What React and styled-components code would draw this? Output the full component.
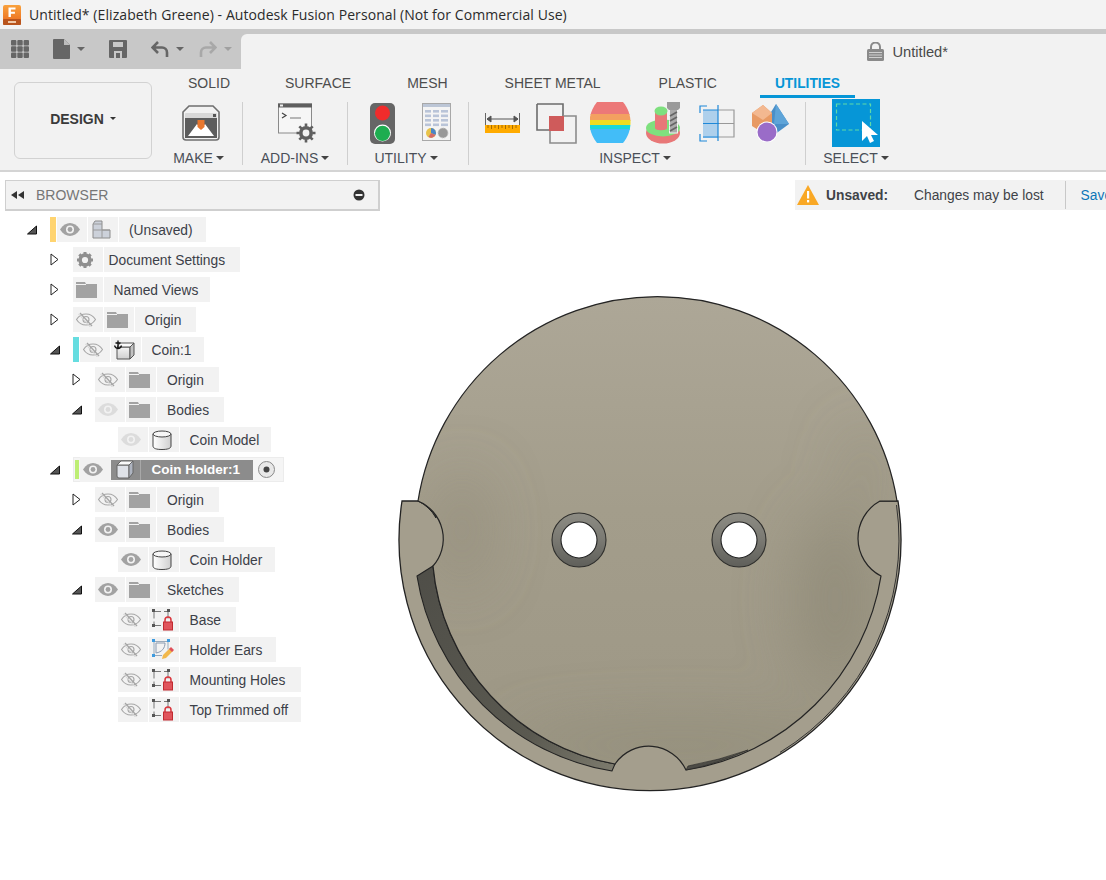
import React from "react";
import styled, { createGlobalStyle, css } from "styled-components";

const Global = createGlobalStyle`
  html, body { margin: 0; padding: 0; background: #fff; }
  body { font-family: "Liberation Sans", Arial, sans-serif; }
  * { box-sizing: border-box; }
  svg { flex: none; }
`;

const Page = styled.div`
  width: 1106px; height: 880px; overflow: hidden; display: flex; flex-direction: column; background: #fff;
`;
const TitleBar = styled.div`
  height: 29px; flex: none; background: #f3f3f3; display: flex; align-items: center; padding-left: 3px; gap: 8px;
`;
const TitleText = styled.span`
  font-family: "Open Sans", sans-serif; font-size: 14px; letter-spacing: 0.075px; color: #2b2b2b; white-space: nowrap;
`;
const QuickBar = styled.div`
  height: 40px; flex: none; background: #c8c8c8; display: flex; align-items: stretch;
`;
const QuickTools = styled.div`
  width: 241px; flex: none; display: flex; align-items: center; padding: 0 0 0 11px;
`;
const QuickIcon = styled.span`
  display: flex; align-items: center; margin-left: ${p => p.$ml || 0}px;
`;
const Caret = styled.span`
  display: inline-block; width: 0; height: 0; flex: none;
  border-left: ${p => p.$s || 4}px solid transparent; border-right: ${p => p.$s || 4}px solid transparent;
  border-top: ${p => p.$s || 4}px solid ${p => p.$c || "#444"};
  margin-left: ${p => p.$ml ?? 4}px;
`;
const DocTab = styled.div`
  flex: 1; margin-top: 5px; background: #f2f2f2; border-top-left-radius: 6px; display: flex; align-items: center; justify-content: flex-end;
  padding: 0 158px 0 0; gap: 8px; font-size: 14.700px; color: #4a4a4a;
`;
const Ribbon = styled.div`
  height: 103px; flex: none; background: #f2f2f2; border-bottom: 2px solid #d4d4d4; display: flex; padding-left: 14px;
`;
const DesignButton = styled.div`
  width: 138px; height: 77px; margin-top: 13px; border: 1px solid #d2d2d2; border-radius: 6px; display: flex; align-items: center; justify-content: center;
  font-size: 14px; font-weight: 700; color: #3a3a3a; padding-bottom: 4px;
`;
const RibbonMain = styled.div`
  flex: 1; display: flex; flex-direction: column;
`;
const Tabs = styled.div`
  display: flex; padding-left: 21px; height: 30px;
`;
const Tab = styled.div`
  height: 29px; padding: 6px 15px 0; line-height: 16px; font-size: 14px; color: #4d4d4d; white-space: nowrap; margin-left: ${p => p.$ml || 0}px;
  ${p => p.$active && css`color: #0696d7; font-weight: 700; border-bottom: 3px solid #0696d7; font-size: 13.800px; padding-top: 7px;`}
`;
const Groups = styled.div`
  display: flex; margin-left: 6px; height: 70px;
`;
const Group = styled.div`
  width: ${p => p.$w}px; flex: none; display: flex; flex-direction: column; align-items: center; position: relative;
  ${p => p.$sep && css`
    &::after { content: ""; position: absolute; right: 0; top: 3px; height: 63px; width: 1px; background: #cfcfcf; }
  `}
`;
const GroupIcons = styled.div`
  height: 48px; display: flex; align-items: center; gap: ${p => p.$gap || 0}px; margin-left: ${p => p.$ml || 0}px;
`;
const GroupLabel = styled.div`
  margin-top: 3px; height: 16px; line-height: 16px; font-size: 14px; color: #4a4f58; display: flex; align-items: center; white-space: nowrap; margin-right: ${p => p.$mr || 0}px;
`;
const Viewport = styled.div`
  flex: 1; position: relative; background: #fff;
`;
const ModelSvg = styled.svg`
  position: absolute; left: 0; top: 0; display: block;
`;
const BrowserOverlay = styled.div`
  position: absolute; left: 5px; top: 8px; width: 375px;
`;
const BrowserHead = styled.div`
  height: 31px; background: #f2f2f2; border: 1px solid #cfcfcf; border-width: 1px 2px 2px 1px; display: flex; align-items: center; padding: 0 13px 0 5px; font-size: 14px; color: #767676;
`;
const HeadTitle = styled.span`
  margin-left: 11px; flex: 1;
`;
const Tree = styled.div`
  margin-top: 6px; margin-left: -5px; display: flex; flex-direction: column; gap: 5px;
`;
const Row = styled.div`
  height: 25px; display: flex; align-items: center; padding-left: ${p => 27 + p.$level * 22.5}px;
`;
const ArrowSlot = styled.span`
  width: 23px; flex: none; display: flex; align-items: center;
`;
const Chip = styled.div`
  height: 25px; display: flex; gap: 1px; align-items: stretch;
  ${p => p.$selected && css`box-shadow: inset 0 0 0 1px #ececec; background: #f5f5f5;`}
`;
const Strip = styled.span`
  width: ${p => p.$selected ? 4 : 6}px; background: ${p => p.$c}; flex: none;
  ${p => p.$selected && css`margin: 3px 0 3px 2px;`}
`;
const Cell = styled.span`
  width: 30px; flex: none; background: #f2f2f2; display: flex; align-items: center; justify-content: center; padding-right: ${p => p.$pr ?? 3}px;
`;
const Label = styled.span`
  background: #f2f2f2; display: flex; align-items: center; padding: 1px ${p => p.$pr ?? 13}px 0 ${p => p.$pl ?? 10}px;
  font-size: 13.800px; color: #3c4048; white-space: nowrap;
`;
const Highlight = styled.div`
  height: 20px; align-self: center; background: #8c8c8c; display: flex; gap: 1px; width: 142px;
`;
const HighlightIcon = styled.span`
  width: 30px; flex: none; display: flex; align-items: center; justify-content: center; border-right: 1px solid #a8a8a8;
`;
const HighlightText = styled.span`
  padding-left: 10px; line-height: 20px; font-size: 13.500px; font-weight: 700; color: #fff; white-space: nowrap;
`;
const RadioCell = styled.span`
  width: 30px; flex: none; display: flex; align-items: center; justify-content: center; padding-right: 4px;
`;
const Notice = styled.div`
  position: absolute; left: 795px; top: 8px; right: 0; height: 30px; background: #f2f2f2; display: flex; align-items: center; padding-left: 2px; font-size: 13.800px; color: #3f4348; white-space: nowrap;
`;
const NoticeStrong = styled.b`
  margin-left: 7px; width: 88px; flex: none;
`;
const NoticeSep = styled.span`
  width: 1px; height: 28px; background: #c8c8c8; margin: 0 15px 0 21px; flex: none;
`;
const SaveLink = styled.span`
  color: #0d76b8;
`;

/* ---------- icons ---------- */
const Waffle = () => (
  <svg width="18" height="18" viewBox="0 0 18 18" fill="#666">
    {[0, 6.3, 12.6].map(y => [0, 6.3, 12.6].map(x => <rect key={`${x}-${y}`} x={x} y={y} width="5.4" height="5.4" rx="1" />))}
  </svg>
);
const DocIcon = () => (
  <svg width="17" height="20" viewBox="0 0 17 20"><path d="M1 0h10l6 6v13a1 1 0 0 1-1 1H1a1 1 0 0 1-1-1V1a1 1 0 0 1 1-1z" fill="#666" /><path d="M11 0v6h6z" fill="#bdbdbd" /></svg>
);
const SaveIcon = () => (
  <svg width="18" height="18" viewBox="0 0 18 18"><path d="M1 0h16a1 1 0 0 1 1 1v16a1 1 0 0 1-1 1H1a1 1 0 0 1-1-1V1a1 1 0 0 1 1-1z" fill="#666" /><rect x="4" y="2" width="10" height="5" fill="#c8c8c8" /><rect x="5" y="11" width="8" height="7" fill="#c8c8c8" /><rect x="7" y="13" width="4" height="5" fill="#666" /></svg>
);
const UndoIcon = ({ c = "#666", flip }) => (
  <svg width="18" height="17" viewBox="0 0 18 17" transform={flip ? "scale(-1 1)" : undefined}><path d="M7 1L1.5 6.5 7 12M2.5 6.5H11a5 5 0 0 1 5 5V16" fill="none" stroke={c} strokeWidth="2.6" /></svg>
);
const AppLogo = () => (
  <svg width="18" height="20" viewBox="0 0 18 20">
    <defs><linearGradient id="lg" x1="0" y1="0" x2="0" y2="1"><stop offset="0" stopColor="#f9a13c" /><stop offset="1" stopColor="#e9671c" /></linearGradient></defs>
    <rect width="18" height="20" rx="2" fill="url(#lg)" />
    <rect y="14" width="18" height="6" rx="1" fill="#b9541c" />
    <path d="M5.5 2.5h7v2h-4.6v2.2h4v2h-4v3.3H5.5z" fill="#fff" />
    <rect x="5" y="16" width="8" height="2" fill="#f1c9a8" />
  </svg>
);
const LockIcon = () => (
  <svg width="17" height="19" viewBox="0 0 17 19"><path d="M4 8V5a4.5 4.5 0 0 1 9 0v3" fill="none" stroke="#8a8a8a" strokeWidth="2" /><rect y="7" width="17" height="12" rx="1.5" fill="#8a8a8a" /><path d="M2 10.500h13M2 13h13M2 15.500h13" stroke="#d0d0d0" strokeWidth="1" /></svg>
);
const MakeIcon = () => (
  <svg width="38" height="36" viewBox="0 0 38 36">
    <path d="M7 1h24l6 6v25a3 3 0 0 1-3 3H4a3 3 0 0 1-3-3V7z" fill="#f2f2f2" stroke="#6f6f6f" strokeWidth="1.600" />
    <rect x="3" y="8" width="32" height="25" rx="1" fill="#d8d8d8" />
    <rect x="3" y="13" width="32" height="20" fill="#5d5d5d" />
    <path d="M6 31l9-12 4 5 4-5 9 12z" fill="#fff" />
    <rect x="31" y="9" width="3" height="3" fill="#555" />
    <path d="M15.500 15h7v7l-3.500 3-3.500-3z" fill="#e8772e" />
  </svg>
);
const AddInsIcon = () => (
  <svg width="38" height="40" viewBox="0 0 38 40">
    <rect x="0.500" y="1" width="33" height="29" fill="#f6f6f6" stroke="#8a8a8a" />
    <rect x="0" y="0.500" width="34" height="4" fill="#5e5e5e" />
    <rect x="2" y="1.500" width="3" height="2" fill="#eee" />
    <path d="M4 10l4 2.500-4 2.500" fill="none" stroke="#444" strokeWidth="1.200" />
    <path d="M12 15h11" stroke="#777" strokeWidth="1" />
    <circle cx="28" cy="30" r="7" fill="#5f5f5f" />
    <circle cx="28" cy="30" r="3.400" fill="#f2f2f2" />
    <path d="M28 20.500v3M28 36.500v3M18.500 30h3M34.500 30h3M21.300 23.300l2.100 2.100M32.600 34.600l2.100 2.100M21.300 36.700l2.100-2.100M32.600 25.400l2.100-2.100" stroke="#5f5f5f" strokeWidth="2.600" />
  </svg>
);
const TrafficIcon = () => (
  <svg width="26" height="41" viewBox="0 0 26 41">
    <rect width="25" height="41" rx="5" fill="#666" />
    <circle cx="12.500" cy="10" r="7.500" fill="#f02c2c" />
    <circle cx="12.500" cy="30" r="8.500" fill="#fff" />
    <circle cx="12.500" cy="30.300" r="7.600" fill="#1ead50" />
  </svg>
);
const TableIcon = () => (
  <svg width="30" height="40" viewBox="0 0 30 40">
    <rect x="0.500" y="0.500" width="28" height="37" fill="#f4f4f4" stroke="#a8a8a8" />
    <rect x="1" y="1" width="27" height="3" fill="#bcc6d6" />
    {[7, 11.500, 16, 20.500].map(y => <g key={y} fill="#b9c4d8"><rect x="3" y={y} width="6" height="2.600" /><rect x="11" y={y} width="6" height="2.600" /><rect x="19" y={y} width="7" height="2.600" /></g>)}
    <circle cx="9" cy="30" r="5" fill="#e8c34a" /><path d="M9 30V25a5 5 0 0 1 4.500 7z" fill="#4a86c8" /><path d="M9 30l4.500 2a5 5 0 0 1-7 2z" fill="#d46a6a" />
    <circle cx="21" cy="30" r="5" fill="#999" stroke="#ccc" strokeDasharray="1.500 1" />
  </svg>
);
const RulerIcon = () => (
  <svg width="38" height="21" viewBox="0 0 38 21">
    <path d="M0.500 0v13M34.500 0v13" stroke="#666" />
    <path d="M2 6h31M2 6l4-3v6zM33 6l-4-3v6z" fill="#555" stroke="#555" strokeWidth="1" />
    <rect y="12" width="35" height="8" fill="#ffab00" />
    <path d="M3 12v3M6.500 12v4M10 12v3M13.500 12v4M17 12v3M20.500 12v4M24 12v3M27.500 12v4M31 12v3" stroke="#a86c00" strokeWidth="1" />
  </svg>
);
const InterfIcon = () => (
  <svg width="41" height="41" viewBox="0 0 41 41">
    <path d="M1 1h26v12M13 27H1V1" fill="none" stroke="#6c6c6c" strokeWidth="1.600" />
    <path d="M27 13h13v27H14V27" fill="none" stroke="#8c8c8c" strokeWidth="1.600" />
    <rect x="13" y="13" width="15" height="15" fill="#cf5b5b" />
  </svg>
);
const ZebraIcon = () => (
  <svg width="43" height="42" viewBox="0 0 43 42">
    <defs><clipPath id="barrel"><path d="M7 0h26c10 12 10 29 0 41H7C-3 29-3 12 7 0z" /></clipPath></defs>
    <g clipPath="url(#barrel)">
      <rect width="41" height="13" fill="#ec7878" />
      <rect y="12" width="41" height="7" fill="#f3a060" />
      <rect y="18" width="41" height="5" fill="#eedd20" />
      <rect y="23" width="41" height="5" fill="#18d8d8" />
      <rect y="27" width="41" height="15" fill="#42bdf8" />
    </g>
  </svg>
);
const BoltIcon = () => (
  <svg width="40" height="42" viewBox="0 0 40 42">
    <ellipse cx="17" cy="31" rx="17" ry="10.500" fill="#e87878" />
    <ellipse cx="17" cy="26" rx="17" ry="8.500" fill="#7ee07e" />
    <path d="M9 9v17c0 3 12 3 12 0V9z" fill="#e87878" />
    <ellipse cx="15" cy="9" rx="6.500" ry="4.500" fill="#7ee07e" />
    <rect x="23.500" y="7" width="8" height="24" fill="#aaa" stroke="#f2f2f2" />
    <path d="M24 14l7-4M24 19l7-4M24 24l7-4M24 29l7-4" stroke="#666" strokeWidth="1.600" />
    <path d="M21 0h13v6l-2 2H23l-2-2z" fill="#9a9a9a" />
  </svg>
);
const SectionIcon = () => (
  <svg width="40" height="37" viewBox="0 0 40 37">
    <rect x="4" y="5" width="15" height="14" fill="#aed0ec" />
    <rect x="4" y="19" width="15" height="14" fill="#aed0ec" />
    <path d="M19 5h16v27H19M19 18.500h16" fill="none" stroke="#999" strokeWidth="1.200" />
    <path d="M4 18.500h16M4 5h15M4 32h15M19 0v36" fill="none" stroke="#1e88d8" strokeWidth="1.200" />
    <path d="M8 1H1v7M8 36H1v-7" fill="none" stroke="#1e88d8" strokeWidth="1.200" />
  </svg>
);
const ShapesIcon = () => (
  <svg width="38" height="38" viewBox="0 0 38 38">
    <path d="M16 13L24 0l13 20-15 11z" fill="#4a8fc8" /><path d="M24 0l13 20-15 0z" fill="#5ea4d8" />
    <path d="M0 9l11-8 9 8v13l-9 7-11-7z" fill="#e89a64" /><path d="M0 9l11-8 9 8-9 7z" fill="#f3b890" />
    <circle cx="15" cy="28" r="10.500" fill="#fff" /><circle cx="15" cy="28" r="9.500" fill="#9a6cc8" />
  </svg>
);
const SelectIcon = () => (
  <svg width="48" height="48" viewBox="0 0 48 48">
    <rect width="48" height="48" fill="#0696d7" />
    <rect x="4.500" y="5" width="34" height="26" fill="none" stroke="#5fd9a8" strokeWidth="1.200" strokeDasharray="4 2.500" />
    <path d="M30 22v20l5-5 3 7 4-2-3-6h7z" fill="#fff" />
  </svg>
);
const WarnIcon = () => (
  <svg width="22" height="20" viewBox="0 0 22 20">
    <path d="M11 0l11 20H0z" fill="#f9a825" /><rect x="10" y="6" width="2.200" height="7.500" fill="#fff" /><rect x="10" y="15" width="2.200" height="2.400" fill="#fff" />
  </svg>
);
const Rewind = () => (
  <svg width="14" height="8" viewBox="0 0 14 8" fill="#333"><path d="M6 0v8L0 4zM13 0v8L7 4z" /></svg>
);
const MinusDot = () => (
  <svg width="12" height="12" viewBox="0 0 12 12"><circle cx="6" cy="6" r="5.500" fill="#333" /><rect x="2.500" y="5" width="7" height="2" fill="#f2f2f2" /></svg>
);
const ArrowOpen = () => (
  <svg width="10" height="10" viewBox="0 0 10 10"><path d="M9.500 1v8H0.500z" fill="#555" stroke="#111" strokeWidth="1" strokeLinejoin="round" /></svg>
);
const ArrowClosed = () => (
  <svg width="9" height="13" viewBox="0 0 9 13"><path d="M1 1l7 5.500-7 5.500z" fill="#fff" stroke="#222" strokeWidth="1" /></svg>
);
const Eye = ({ faint }) => (
  <svg width="20" height="13" viewBox="0 0 20 13">
    <path d="M0 6.500C3 2 6.500 0 10 0s7 2 10 6.500C17 11 13.500 13 10 13S3 11 0 6.500z" fill={faint ? "#dcdcdc" : "#a2a2a2"} />
    <circle cx="10" cy="6.500" r="4" fill="#f2f2f2" /><circle cx="10" cy="6.500" r="2.400" fill={faint ? "#dcdcdc" : "#a2a2a2"} />
  </svg>
);
const EyeOff = () => (
  <svg width="20" height="15" viewBox="0 0 20 15" fill="none" stroke="#a6a6a6" strokeWidth="1.100">
    <path d="M0.500 7.500C3 3.500 6.500 2 10 2s7 1.500 9.500 5.500C17 11.500 13.500 13 10 13S3 11.500 0.500 7.500z" />
    <circle cx="10" cy="7.500" r="3" /><path d="M4 1l12 13" strokeWidth="1.300" /><path d="M2.500 2l12 13" stroke="#d6d6d6" />
  </svg>
);
const Folder = () => (
  <svg width="21" height="16" viewBox="0 0 21 16"><path d="M0 0h9l1 2h11v14H0z" fill="#a2a2a2" /><rect y="2" width="10" height="1" fill="#f2f2f2" /></svg>
);
const Gear = () => (
  <svg width="16" height="16" viewBox="0 0 18 18">
    <circle cx="9" cy="9" r="5.500" fill="none" stroke="#8f8f8f" strokeWidth="4" />
    <path d="M9 0v3M9 15v3M0 9h3M15 9h3M2.600 2.600l2.200 2.200M13.200 13.200l2.200 2.200M2.600 15.400l2.200-2.200M13.200 4.800l2.200-2.200" stroke="#8f8f8f" strokeWidth="3.400" />
  </svg>
);
const RootIcon = () => (
  <svg width="19" height="19" viewBox="0 0 19 19">
    <path d="M1 4l2-3h7v9h8v8H1z" fill="#ccd1da" stroke="#8c8c8c" strokeWidth="1" />
    <path d="M1 10h17M10 10v8M1 4h9" stroke="#9a9a9a" strokeWidth="1" fill="none" />
  </svg>
);
const AnchorCube = () => (
  <svg width="21" height="20" viewBox="0 0 21 20">
    <defs><linearGradient id="ac" x1="0" x2="0" y1="0" y2="1"><stop offset="0" stopColor="#f4f4f4" /><stop offset="1" stopColor="#cfcfcf" /></linearGradient></defs>
    <path d="M3 7h13v12H3z" fill="url(#ac)" stroke="#555" /><path d="M16 7l4-4v12l-4 4z" fill="#c2c2c2" stroke="#555" /><path d="M6 3h14l-4 4H3z" fill="#fafafa" stroke="#555" />
    <path d="M4 0.500v8M1.500 3h5M0.500 5.500c.5 2 2 3 3.500 3s3-1 3.500-3" stroke="#111" strokeWidth="1.300" fill="none" />
  </svg>
);
const Cube = () => (
  <svg width="18" height="19" viewBox="0 0 18 19">
    <path d="M1 5h12v13H3a2 2 0 0 1-2-2z" fill="#dfe2e8" stroke="#666" /><path d="M13 5l4-4v12l-4 5z" fill="#aeb4c0" stroke="#666" /><path d="M5 1h12l-4 4H1z" fill="#fafafa" stroke="#666" />
  </svg>
);
const Cylinder = () => (
  <svg width="20" height="20" viewBox="0 0 20 20">
    <defs><linearGradient id="cy" x1="0" x2="1" y1="0" y2="0"><stop offset="0" stopColor="#fff" /><stop offset="1" stopColor="#cfcfcf" /></linearGradient></defs>
    <path d="M1 4v12c0 2.500 3.500 3.500 9 3.500s9-1 9-3.500V4z" fill="url(#cy)" stroke="#444" />
    <ellipse cx="10" cy="4" rx="9" ry="3" fill="#f6f6f6" stroke="#444" />
  </svg>
);
const SketchBase = ({ blue }) => {
  const c = blue ? "#3d9be0" : "#555";
  return (
    <>
      <path d="M3 3.500h14M3 3.500v14M3 17.500h8M17 3.500v8" fill="none" stroke={blue ? "#9ab" : "#777"} strokeDasharray={blue ? undefined : "7 3"} strokeWidth="1" />
      {[[1, 1], [16, 1], [1, 16]].map(([x, y]) => <rect key={x + "," + y} x={x} y={y} width="3" height="3" fill={c} />)}
    </>
  );
};
const SketchLocked = () => (
  <svg width="23" height="23" viewBox="0 0 23 23">
    <SketchBase />
    <path d="M14 14v-2a3 3 0 0 1 6 0v2" fill="none" stroke="#d9363e" strokeWidth="1.500" />
    <rect x="12.500" y="14" width="9" height="8" fill="#e0555c" stroke="#c02a30" />
  </svg>
);
const SketchEdit = () => (
  <svg width="23" height="23" viewBox="0 0 23 23">
    <SketchBase blue />
    <path d="M5 15C11 14 14 10 14 5H5z" fill="none" stroke="#8a9ab0" />
    <path d="M11 21l1-4 7-7 3 3-7 7z" fill="#f2b84b" /><path d="M18 11l2-2 3 3-2 2z" fill="#e0505a" />
  </svg>
);
const Radio = () => (
  <svg width="17" height="17" viewBox="0 0 17 17">
    <circle cx="8.500" cy="8.500" r="8" fill="#e8e8e8" stroke="#8a8a8a" /><circle cx="8.500" cy="8.500" r="3" fill="#444" />
  </svg>
);

const icons = {
  root: <RootIcon />, gear: <Gear />, folder: <Folder />, anchor: <AnchorCube />, cyl: <Cylinder />,
  lock: <SketchLocked />, edit: <SketchEdit />,
};

const nodes = [
  { level: 0, arrow: "open", strip: "#ffd470", eye: "on", icon: "root", text: "(Unsaved)", pr: 13 },
  { level: 1, arrow: "closed", icon: "gear", iconPr: 6, text: "Document Settings", pl: 5, pr: 15 },
  { level: 1, arrow: "closed", icon: "folder", text: "Named Views", pl: 10, pr: 12 },
  { level: 1, arrow: "closed", eye: "off", icon: "folder", text: "Origin", pr: 15 },
  { level: 1, arrow: "open", strip: "#66dde0", eye: "off", icon: "anchor", text: "Coin:1", pr: 13 },
  { level: 2, arrow: "closed", eye: "off", icon: "folder", text: "Origin", pr: 15 },
  { level: 2, arrow: "open", eye: "faint", icon: "folder", text: "Bodies", pr: 15 },
  { level: 3, eye: "faint", icon: "cyl", text: "Coin Model", pr: 12 },
  { level: 1, arrow: "open", selected: true, strip: "#bdee74", eye: "on", text: "Coin Holder:1" },
  { level: 2, arrow: "closed", eye: "off", icon: "folder", text: "Origin", pr: 15 },
  { level: 2, arrow: "open", eye: "on", icon: "folder", text: "Bodies", pr: 15 },
  { level: 3, eye: "on", icon: "cyl", text: "Coin Holder", pr: 13 },
  { level: 2, arrow: "open", eye: "on", icon: "folder", text: "Sketches", pr: 15 },
  { level: 3, eye: "off", icon: "lock", text: "Base", pr: 15 },
  { level: 3, eye: "off", icon: "edit", text: "Holder Ears", pr: 14 },
  { level: 3, eye: "off", icon: "lock", text: "Mounting Holes", pr: 16 },
  { level: 3, eye: "off", icon: "lock", text: "Top Trimmed off", pr: 13 },
];

const TreeRow = ({ n }) => (
  <Row $level={n.level}>
    <ArrowSlot>{n.arrow === "open" ? <ArrowOpen /> : n.arrow === "closed" ? <ArrowClosed /> : null}</ArrowSlot>
    <Chip $selected={n.selected}>
      {n.strip && <Strip $c={n.strip} $selected={n.selected} />}
      {n.eye && <Cell $pr={4}>{n.eye === "off" ? <EyeOff /> : <Eye faint={n.eye === "faint"} />}</Cell>}
      {n.selected ? (
        <>
          <Highlight>
            <HighlightIcon><Cube /></HighlightIcon>
            <HighlightText>{n.text}</HighlightText>
          </Highlight>
          <RadioCell><Radio /></RadioCell>
        </>
      ) : (
        <>
          <Cell $pr={n.iconPr}>{icons[n.icon]}</Cell>
          <Label $pl={n.pl} $pr={n.pr}>{n.text}</Label>
        </>
      )}
    </Chip>
  </Row>
);

const BODY = "M418 501A242.500 242.500 0 0 1 897 501L880 501A42.500 42.500 0 0 0 881 576A233.500 233.500 0 0 1 686 770A41 41 0 0 0 615 764A222 222 0 0 1 433 566A41 41 0 0 0 418 501Z";

const Hole = ({ cx }) => (
  <g>
    <circle cx={cx} cy="540" r="27" fill="url(#ring)" stroke="#2e2e2c" strokeWidth="1.100" />
    <circle cx={cx} cy="540" r="18" fill="#fff" stroke="#222" strokeWidth="1.100" />
  </g>
);

const Model = () => (
  <ModelSvg width="1106" height="708" viewBox="0 172 1106 708">
    <defs>
      <linearGradient id="bodyFill" x1="0" x2="0" y1="0" y2="1">
        <stop offset="0" stopColor="#ada797" />
        <stop offset="0.45" stopColor="#a39d8b" />
        <stop offset="1" stopColor="#9d9785" />
      </linearGradient>
      <linearGradient id="ring" x1="0" x2="0" y1="0" y2="1">
        <stop offset="0" stopColor="#8d8c84" />
        <stop offset="0.5" stopColor="#7a7972" />
        <stop offset="1" stopColor="#5f5f5a" />
      </linearGradient>
      <linearGradient id="groove" x1="0" x2="1" y1="0" y2="1">
        <stop offset="0" stopColor="#4f4e48" />
        <stop offset="0.7" stopColor="#5a5950" />
        <stop offset="1" stopColor="#7d7b6e" />
      </linearGradient>
      <clipPath id="bodyClip"><path d={BODY} /></clipPath>
      <filter id="soft" x="-50%" y="-50%" width="200%" height="200%"><feGaussianBlur stdDeviation="28" /></filter>
    </defs>
    <path d="M402 501A251 251 0 1 0 898 501Z" fill="#a49e8d" stroke="#222" strokeWidth="1.300" />
    <path d="M417 576A235 235 0 0 0 612 771L615 764A222 222 0 0 1 433 566Z" fill="url(#groove)" stroke="#222" strokeWidth="1.100" />
    <path d="M418 501L433 503L436 518A41 41 0 0 0 418 501Z" fill="#55544d" stroke="#222" strokeWidth="1" />
    <path d={BODY} fill="url(#bodyFill)" />
    <g clipPath="url(#bodyClip)">
      <g filter="url(#soft)">
        <ellipse cx="835" cy="600" rx="40" ry="90" fill="#8b8673" opacity="0.6" />
        <ellipse cx="462" cy="530" rx="26" ry="60" fill="#8b8673" opacity="0.45" />
        <ellipse cx="865" cy="470" rx="22" ry="45" fill="#8b8673" opacity="0.35" />
        <ellipse cx="680" cy="745" rx="170" ry="22" fill="#8b8673" opacity="0.55" />
      </g>
    </g>
    <path d={BODY} fill="none" stroke="#242424" strokeWidth="1.200" />
    <path d="M896.500 505A249 249 0 0 1 780 752.400" fill="none" stroke="#333" strokeWidth="1" />
    <path d="M686 770Q715 765 748 750Q720 760 688 766Z" fill="#4d4c46" stroke="#222" strokeWidth="0.600" />
    <Hole cx={579} />
    <Hole cx={739} />
  </ModelSvg>
);

export default function App() {
  return (
    <Page>
      <Global />
      <TitleBar>
        <AppLogo />
        <TitleText>Untitled* (Elizabeth Greene) - Autodesk Fusion Personal (Not for Commercial Use)</TitleText>
      </TitleBar>
      <QuickBar>
        <QuickTools>
          <Waffle />
          <QuickIcon $ml={24}><DocIcon /></QuickIcon>
          <Caret $ml={7} $c="#666" />
          <QuickIcon $ml={24}><SaveIcon /></QuickIcon>
          <QuickIcon $ml={24}><UndoIcon /></QuickIcon>
          <Caret $ml={7} $c="#666" />
          <QuickIcon $ml={15}><UndoIcon c="#a8a8a8" flip /></QuickIcon>
          <Caret $ml={7} $c="#a0a0a0" />
        </QuickTools>
        <DocTab><LockIcon />Untitled*</DocTab>
      </QuickBar>
      <Ribbon>
        <DesignButton>DESIGN<Caret $s={3.500} $ml={6} $c="#333" /></DesignButton>
        <RibbonMain>
          <Tabs>
            <Tab>SOLID</Tab>
            <Tab $ml={25}>SURFACE</Tab>
            <Tab $ml={26}>MESH</Tab>
            <Tab $ml={27}>SHEET METAL</Tab>
            <Tab $ml={28}>PLASTIC</Tab>
            <Tab $ml={28} $active>UTILITIES</Tab>
          </Tabs>
          <Groups>
            <Group $w={85} $sep>
              <GroupIcons><MakeIcon /></GroupIcons>
              <GroupLabel $mr={4}>MAKE<Caret $s={4} $ml={3} /></GroupLabel>
            </Group>
            <Group $w={105} $sep>
              <GroupIcons $ml={3}><AddInsIcon /></GroupIcons>
              <GroupLabel $mr={1}>ADD-INS<Caret $s={4} $ml={3} /></GroupLabel>
            </Group>
            <Group $w={121} $sep>
              <GroupIcons $gap={26} $ml={4}><TrafficIcon /><TableIcon /></GroupIcons>
              <GroupLabel $mr={5}>UTILITY<Caret $s={4} $ml={3} /></GroupLabel>
            </Group>
            <Group $w={337} $sep>
              <GroupIcons $gap={13}><RulerIcon /><InterfIcon /><ZebraIcon /><BoltIcon /><SectionIcon /><ShapesIcon /></GroupIcons>
              <GroupLabel $mr={5}>INSPECT<Caret $s={4} $ml={3} /></GroupLabel>
            </Group>
            <Group $w={100}>
              <GroupIcons><SelectIcon /></GroupIcons>
              <GroupLabel>SELECT<Caret $s={4} $ml={3} /></GroupLabel>
            </Group>
          </Groups>
        </RibbonMain>
      </Ribbon>
      <Viewport>
        <Model />
        <BrowserOverlay>
          <BrowserHead><Rewind /><HeadTitle>BROWSER</HeadTitle><MinusDot /></BrowserHead>
          <Tree>{nodes.map((n, i) => <TreeRow key={i} n={n} />)}</Tree>
        </BrowserOverlay>
        <Notice>
          <WarnIcon />
          <NoticeStrong>Unsaved:</NoticeStrong>
          Changes may be lost
          <NoticeSep />
          <SaveLink>Save</SaveLink>
        </Notice>
      </Viewport>
    </Page>
  );
}
